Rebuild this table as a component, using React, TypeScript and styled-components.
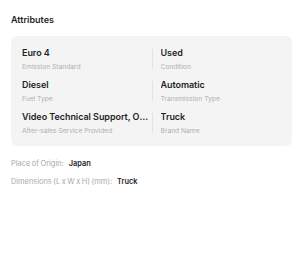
import { FunctionComponent } from 'react';
import styled, { createGlobalStyle } from 'styled-components';

const GlobalStyle = createGlobalStyle`
  html, body {
    margin: 0;
    padding: 0;
    background: #ffffff;
  }

  body {
    font-family: Inter, "Noto Sans", sans-serif;
    color: #1f1f1f;
    -webkit-font-smoothing: antialiased;
  }
`;

const Page = styled.div`
  width: 300px;
  padding: 14px 8px 0 11px;
  box-sizing: border-box;
`;

const Title = styled.h2`
  margin: 0 0 10px;
  font-size: 9px;
  line-height: 12px;
  font-weight: 600;
  color: #1f1f1f;
`;

const AttrCard = styled.div`
  display: grid;
  grid-template-columns: 1fr 1fr;
  row-gap: 7px;
  padding: 11px 11px 10px;
  background: #f4f4f4;
  border-radius: 6px;
`;

// second column gets a thin divider, a little shorter than the item itself
const AttrItem = styled.div<{ $divided?: boolean }>`
  position: relative;
  min-width: 0;
  padding: ${({ $divided }) => ($divided ? '0 9px' : '0 1px 0 0')};

  &::before {
    content: '';
    display: ${({ $divided }) => ($divided ? 'block' : 'none')};
    position: absolute;
    left: 0;
    top: 2px;
    bottom: 3px;
    width: 1px;
    background: #e3e3e3;
  }
`;

const AttrValue = styled.div`
  font-size: 9px;
  line-height: 12px;
  font-weight: 600;
  letter-spacing: -0.05px;
  color: #1f1f1f;
  white-space: nowrap;
  overflow: hidden;
  text-overflow: ellipsis;
`;

const AttrLabel = styled.div`
  margin-top: 3px;
  font-size: 6.7px;
  line-height: 10px;
  color: #b0b0b0;
  white-space: nowrap;
  overflow: hidden;
  text-overflow: ellipsis;
`;

const Extras = styled.div`
  display: flex;
  flex-direction: column;
  gap: 8px;
  margin-top: 13px;
`;

const ExtraRow = styled.div`
  display: flex;
  align-items: baseline;
  gap: 5px;
  font-size: 7.4px;
  line-height: 10px;
`;

const ExtraLabel = styled.span`
  color: #a9a9a9;
  word-spacing: -0.5px;
`;

const ExtraValue = styled.span`
  font-weight: 600;
  color: #1f1f1f;
`;

type Attribute = {
  value: string;
  label: string;
};

const attributes: Attribute[] = [
  { value: 'Euro 4', label: 'Emission Standard' },
  { value: 'Used', label: 'Condition' },
  { value: 'Diesel', label: 'Fuel Type' },
  { value: 'Automatic', label: 'Transmission Type' },
  { value: 'Video Technical Support, Online Support', label: 'After-sales Service Provided' },
  { value: 'Truck', label: 'Brand Name' },
];

const extras: Attribute[] = [
  { label: 'Place of Origin:', value: 'Japan' },
  { label: 'Dimensions (L x W x H) (mm):', value: 'Truck' },
];

const App: FunctionComponent = () => (
  <>
    <GlobalStyle />
    <Page>
      <Title>Attributes</Title>

      <AttrCard>
        {attributes.map((attr, i) => (
          <AttrItem key={attr.label} $divided={i % 2 === 1}>
            <AttrValue>{attr.value}</AttrValue>
            <AttrLabel>{attr.label}</AttrLabel>
          </AttrItem>
        ))}
      </AttrCard>

      <Extras>
        {extras.map(row => (
          <ExtraRow key={row.label}>
            <ExtraLabel>{row.label}</ExtraLabel>
            <ExtraValue>{row.value}</ExtraValue>
          </ExtraRow>
        ))}
      </Extras>
    </Page>
  </>
);

export default App;
